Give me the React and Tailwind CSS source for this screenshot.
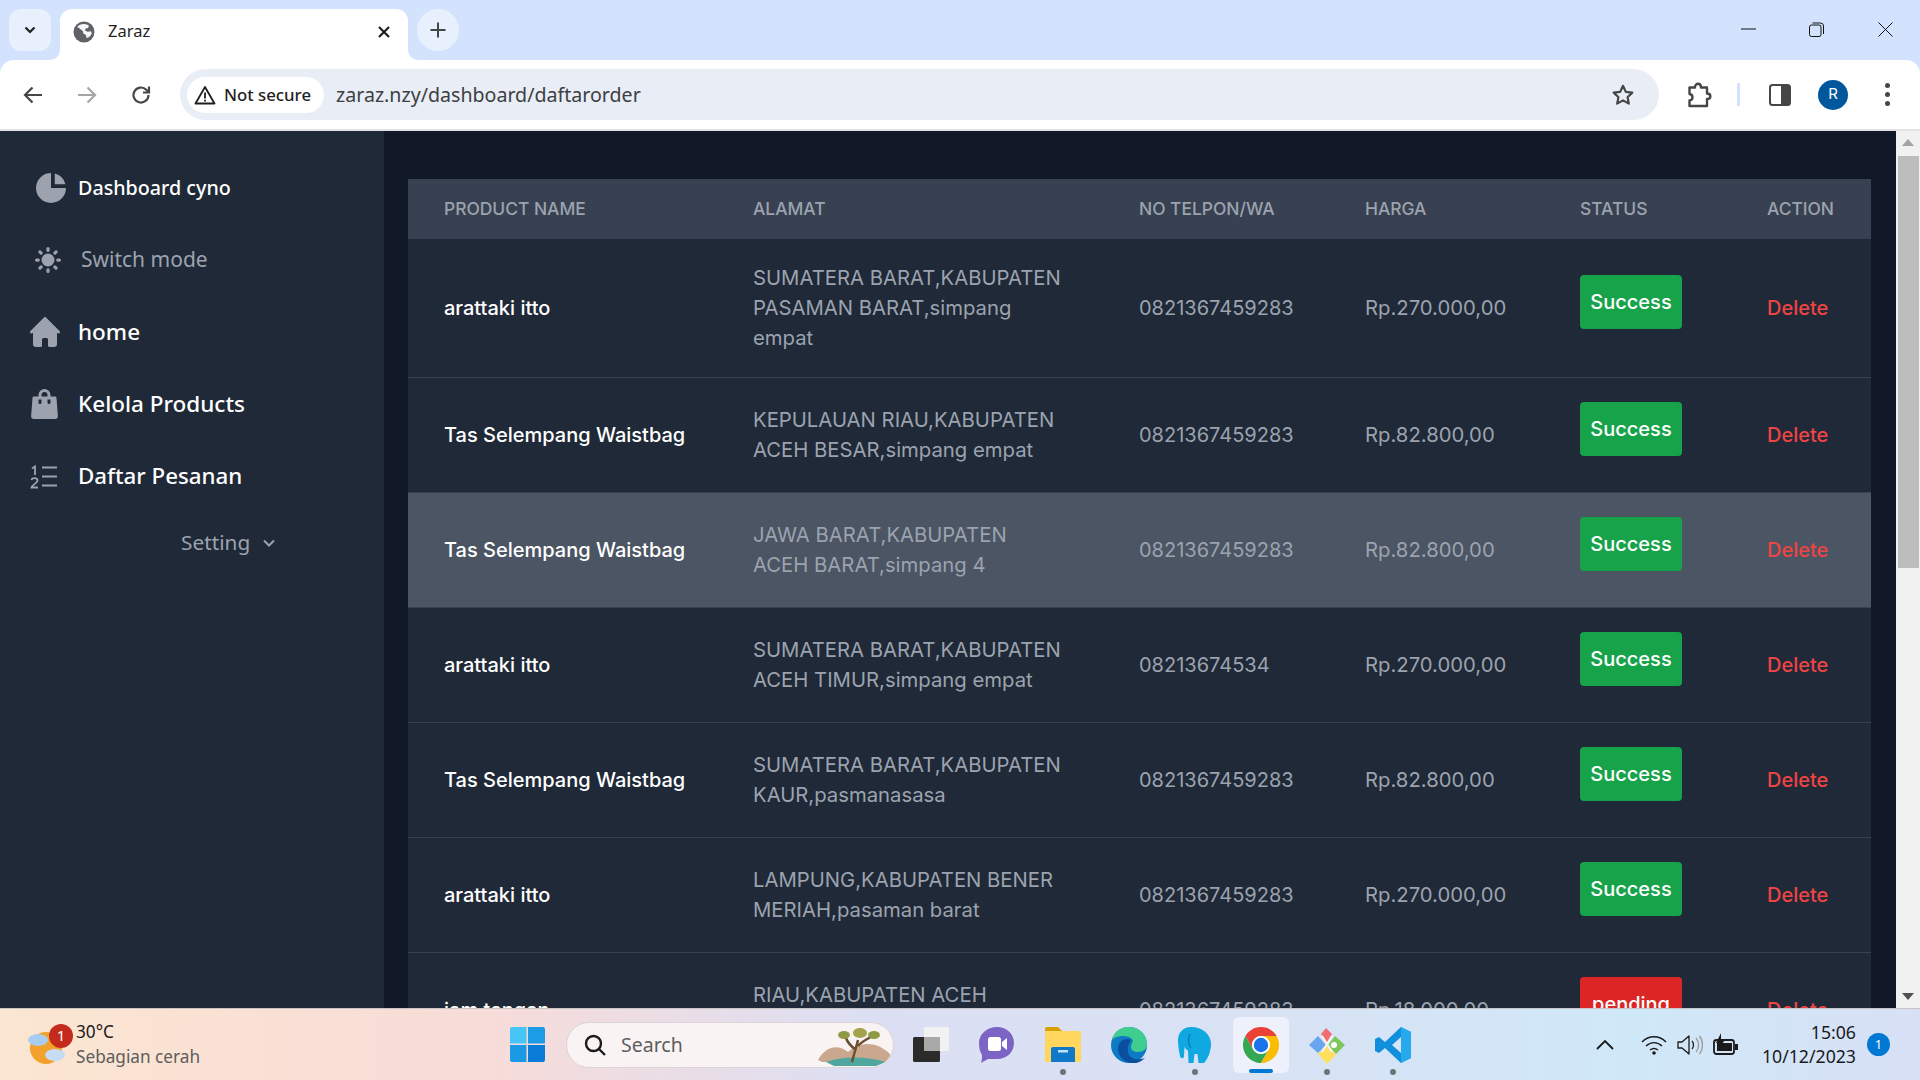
import React from 'react';

const orders = [
  { name: 'arattaki itto', address: ['SUMATERA BARAT,KABUPATEN', 'PASAMAN BARAT,simpang', 'empat'], phone: '0821367459283', price: 'Rp.270.000,00', status: 'Success' },
  { name: 'Tas Selempang Waistbag', address: ['KEPULAUAN RIAU,KABUPATEN', 'ACEH BESAR,simpang empat'], phone: '0821367459283', price: 'Rp.82.800,00', status: 'Success' },
  { name: 'Tas Selempang Waistbag', address: ['JAWA BARAT,KABUPATEN', 'ACEH BARAT,simpang 4'], phone: '0821367459283', price: 'Rp.82.800,00', status: 'Success', hovered: true },
  { name: 'arattaki itto', address: ['SUMATERA BARAT,KABUPATEN', 'ACEH TIMUR,simpang empat'], phone: '08213674534', price: 'Rp.270.000,00', status: 'Success' },
  { name: 'Tas Selempang Waistbag', address: ['SUMATERA BARAT,KABUPATEN', 'KAUR,pasmanasasa'], phone: '0821367459283', price: 'Rp.82.800,00', status: 'Success' },
  { name: 'arattaki itto', address: ['LAMPUNG,KABUPATEN BENER', 'MERIAH,pasaman barat'], phone: '0821367459283', price: 'Rp.270.000,00', status: 'Success' },
  { name: 'jam tangan', address: ['RIAU,KABUPATEN ACEH', 'SELATAN,simpang empat'], phone: '0821367459283', price: 'Rp.18.000,00', status: 'pending' },
];

const BrowserBar = () => (
  <div className="bg-[#d3e3fd] shrink-0 font-['Noto_Sans',sans-serif]">
    <div className="h-[60px] flex items-start pt-[9px] pl-[9px]">
      <div className="w-[42px] h-[42px] rounded-[12px] bg-[#e9f0fd] flex items-center justify-center">
        <svg width="14" height="14" viewBox="0 0 14 14" fill="none" stroke="#1f1f1f" strokeWidth="2.2"><path d="M2.5 4.5 7 9l4.5-4.5" /></svg>
      </div>
      <div className="relative ml-[9px] w-[348px] h-[51px] bg-white rounded-t-[12px] flex items-center pl-[13px] pb-[6px]">
        <svg className="absolute left-[-10px] bottom-0" width="10" height="10" viewBox="0 0 10 10"><path d="M10 0v10H0A10 10 0 0 0 10 0z" fill="#fff" /></svg>
        <svg className="absolute right-[-10px] bottom-0" width="10" height="10" viewBox="0 0 10 10"><path d="M0 0v10h10A10 10 0 0 1 0 0z" fill="#fff" /></svg>
        <svg width="22" height="22" viewBox="0 0 22 22">
          <circle cx="11" cy="11" r="10.5" fill="#5f6368" />
          <path d="M11 3c2 0 3.5.7 5 1.8l-1 2.2-2.4.6-.6 2 2.5 1.2 3.4-.6.9 2.2c-1 2.300-2.800 4-5.300 4.700l-.5-3-2.700-1.500-.3-2.300-3.300-2.800L4.200 6C5.600 4.200 8 3 11 3z" fill="#fff" opacity="0.95" />
        </svg>
        <span className="ml-[13px] text-[16.500px] text-[#1f1f1f]">Zaraz</span>
        <svg className="ml-auto mr-[17px]" width="14" height="14" viewBox="0 0 14 14" stroke="#1f1f1f" strokeWidth="2.2"><path d="M2 2l10 10M12 2 2 12" /></svg>
      </div>
      <div className="ml-[9px] w-[42px] h-[42px] rounded-full bg-[#e9f0fd] flex items-center justify-center">
        <svg width="18" height="18" viewBox="0 0 18 18" stroke="#444746" strokeWidth="2"><path d="M9 1.500v15M1.500 9h15" /></svg>
      </div>
      <div className="ml-auto flex items-center h-[40px]">
        <svg className="mr-[53px]" width="15" height="2" viewBox="0 0 15 2"><path d="M0 1h15" stroke="#111" strokeWidth="1" /></svg>
        <svg className="mr-[54px]" width="15" height="15" viewBox="0 0 15 15" fill="none" stroke="#111" strokeWidth="1"><rect x="0.500" y="3" width="11.500" height="11.500" rx="2" /><path d="M3.500 1h8a3 3 0 0 1 3 3v8" /></svg>
        <svg className="mr-[27px]" width="15" height="15" viewBox="0 0 15 15" stroke="#111" strokeWidth="1"><path d="M.5.5l14 14M14.500.5l-14 14" /></svg>
      </div>
    </div>
    <div className="h-[69px] bg-white rounded-t-[14px] flex items-center">
      <svg className="ml-[22px]" width="22" height="22" viewBox="0 0 22 22" fill="none" stroke="#444746" strokeWidth="2.200"><path d="M20 11H3M10.500 3.500 3 11l7.500 7.500" /></svg>
      <svg className="ml-[32px]" width="22" height="22" viewBox="0 0 22 22" fill="none" stroke="#a3a5a8" strokeWidth="2.200"><path d="M2 11h17M11.500 3.500 19 11l-7.500 7.500" /></svg>
      <svg className="ml-[32px]" width="22" height="22" viewBox="0 0 22 22" fill="none" stroke="#444746" strokeWidth="2.200"><path d="M18.500 11a7.500 7.500 0 1 1-2.200-5.300L18.500 8" /><path d="M19 2.500V8.500H13" /></svg>
      <div className="ml-[28px] w-[1479px] h-[51px] rounded-full bg-[#e9edf6] flex items-center pl-[7px] shrink-0">
        <div className="w-[137px] h-[36px] rounded-full bg-white flex items-center pl-[7px]">
          <svg width="22" height="20" viewBox="0 0 22 20" fill="none" stroke="#1f1f1f" strokeWidth="1.800"><path d="M11 2 20.500 18.500h-19z" strokeLinejoin="round" /><path d="M11 7.500v6M11 14.800v1.700" /></svg>
          <span className="ml-[8px] text-[16.800px] font-medium text-[#1f1f1f] whitespace-nowrap">Not secure</span>
        </div>
        <span className="ml-[12px] text-[19.600px] text-[#3c4043]">zaraz.nzy/dashboard/daftarorder</span>
        <svg className="ml-auto mr-[23px]" width="26" height="26" viewBox="0 0 24 24" fill="none" stroke="#444746" strokeWidth="2"><path d="m12 3.500 2.600 5.600 6 .7-4.400 4.200 1.200 6L12 17l-5.400 3 1.200-6-4.400-4.200 6-.7z" strokeLinejoin="round" /></svg>
      </div>
      <svg className="ml-[28px]" width="25" height="26" viewBox="0 0 25 26" fill="none" stroke="#444746" strokeWidth="2.400"><path d="M2.500 5.500h5.500c0-5 6-5 6 0h6v6c4.500 0 4.500 5.500 0 5.500v7H2.500v-5.500c4-.500 4-6 0-6.500z" strokeLinejoin="round" /></svg>
      <div className="ml-[25px] w-[3px] h-[23px] bg-[#d3e3fd]" />
      <svg className="ml-[29px]" width="22" height="22" viewBox="0 0 22 22"><rect x="1" y="1" width="20" height="20" rx="2.500" fill="none" stroke="#444746" strokeWidth="2" /><path d="M12 1h7a2 2 0 0 1 2 2v16a2 2 0 0 1-2 2h-7z" fill="#444746" /></svg>
      <div className="ml-[27px] w-[30px] h-[30px] rounded-full bg-[#01579b] flex items-center justify-center text-white text-[15px] font-['Inter',sans-serif]">R</div>
      <div className="ml-[37px] flex flex-col gap-[4px]">
        <div className="w-[5px] h-[5px] rounded-full bg-[#444746]" />
        <div className="w-[5px] h-[5px] rounded-full bg-[#444746]" />
        <div className="w-[5px] h-[5px] rounded-full bg-[#444746]" />
      </div>
    </div>
    <div className="h-[2px] bg-[#e2e2e2]" />
  </div>
);

const NavRow = ({ icon, label, muted, textClass }) => (
  <div className="h-[72px] flex items-center">
    <div className="w-[78px] flex justify-end shrink-0 pr-[18px]">{icon}</div>
    <span className={`${muted ? 'text-[#9ca3af] font-normal' : 'text-white font-medium'} ${textClass}`}>{label}</span>
  </div>
);

const Sidebar = () => (
  <aside className="w-[384px] shrink-0 bg-[#1f2937] pt-[21px]">
    <NavRow
      textClass="text-[19.700px]"
      label="Dashboard cyno"
      icon={<svg className="mr-[-6px]" width="30" height="30" viewBox="2 2 16 16" fill="#9ca3af"><path d="M2 10a8 8 0 0 1 8-8v8h8a8 8 0 1 1-16 0z" /><path d="M12 2.252A8.014 8.014 0 0 1 17.748 8H12V2.252z" /></svg>}
    />
    <NavRow
      muted
      textClass="ml-[3px] text-[21px]"
      label="Switch mode"
      icon={<svg className="mr-[-1px]" width="26" height="26" viewBox="2 2 16 16" fill="#9ca3af"><path d="M10 2a1 1 0 0 1 1 1v1a1 1 0 1 1-2 0V3a1 1 0 0 1 1-1zm4 8a4 4 0 1 1-8 0 4 4 0 0 1 8 0zm-.464 4.950.707.707a1 1 0 0 0 1.414-1.414l-.707-.707a1 1 0 0 0-1.414 1.414zm2.120-10.607a1 1 0 0 1 0 1.414l-.706.707a1 1 0 1 1-1.414-1.414l.707-.707a1 1 0 0 1 1.414 0zM17 11a1 1 0 1 0 0-2h-1a1 1 0 1 0 0 2h1zm-7 4a1 1 0 0 1 1 1v1a1 1 0 1 1-2 0v-1a1 1 0 0 1 1-1zM5.050 6.464A1 1 0 1 0 6.465 5.050l-.708-.707a1 1 0 0 0-1.414 1.414l.707.707zm1.414 8.486-.707.707a1 1 0 0 1-1.414-1.414l.707-.707a1 1 0 0 1 1.414 1.414zM4 11a1 1 0 1 0 0-2H3a1 1 0 0 0 0 2h1z" /></svg>}
    />
    <NavRow
      textClass="text-[22.500px]"
      label="home"
      icon={<svg width="30" height="30" viewBox="0 0 20 20" fill="#9ca3af"><path d="m19.707 9.293-2-2-7-7a1 1 0 0 0-1.414 0l-7 7-2 2a1 1 0 0 0 1.414 1.414L2 10.414V18a2 2 0 0 0 2 2h3a1 1 0 0 0 1-1v-4a1 1 0 0 1 1-1h2a1 1 0 0 1 1 1v4a1 1 0 0 0 1 1h3a2 2 0 0 0 2-2v-7.586l.293.293a1 1 0 0 0 1.414-1.414Z" /></svg>}
    />
    <NavRow
      textClass="text-[22.500px]"
      label="Kelola Products"
      icon={<svg className="mr-[2px]" width="27" height="30" viewBox="0 0 18 20" fill="#9ca3af"><path d="M17 5.923A1 1 0 0 0 16 5h-3V4a4 4 0 1 0-8 0v1H2a1 1 0 0 0-1 .923L.086 17.846A2 2 0 0 0 2.080 20h13.840a2 2 0 0 0 1.994-2.153L17 5.923ZM7 9a1 1 0 0 1-2 0V7h2v2Zm0-5a2 2 0 1 1 4 0v1H7V4Zm6 5a1 1 0 1 1-2 0V7h2v2Z" /></svg>}
    />
    <NavRow
      textClass="text-[22.300px]"
      label="Daftar Pesanan"
      icon={<svg className="mr-[2px]" width="28" height="25" viewBox="0 0 28 25" fill="none" stroke="#9ca3af" strokeWidth="1.800"><path d="M2 4.500 5 2.500V11M12 3.500h15M12 12.500h15M12 21.500h15M1.500 16c.5-2.500 6-2.500 6 .5 0 2.500-5.500 4.500-6 7h6.500" /></svg>}
    />
    <div className="h-[62px] flex items-center pl-[181px] text-[20.800px] text-[#9ca3af]">
      <span>Setting</span>
      <svg className="ml-[12px]" width="14" height="14" viewBox="0 0 14 14" fill="none" stroke="#9ca3af" strokeWidth="2"><path d="m2 4.500 5 5 5-5" /></svg>
    </div>
  </aside>
);

const OrdersTable = () => (
  <table className="w-[1463px] table-fixed text-[20px] leading-[30px] text-[#9ca3af] font-['Inter',sans-serif]">
    <thead className="bg-[#374151] text-[17.400px] uppercase">
      <tr className="h-[60px] text-left">
        <th className="w-[309px] pl-[36px] font-medium">Product name</th>
        <th className="w-[386px] pl-[36px] font-medium">Alamat</th>
        <th className="w-[226px] pl-[36px] font-medium">No telpon/wa</th>
        <th className="w-[215px] pl-[36px] font-medium">Harga</th>
        <th className="w-[187px] pl-[36px] font-medium">Status</th>
        <th className="pl-[36px] font-medium">Action</th>
      </tr>
    </thead>
    <tbody>
      {orders.map((order, i) => (
        <tr key={i} className={`border-b border-[#374151] ${order.hovered ? 'bg-[#4b5563]' : 'bg-[#1f2937]'} ${order.address.length > 2 ? 'h-[138px]' : 'h-[115px]'}`}>
          <td className="pl-[36px] font-medium text-white whitespace-nowrap">{order.name}</td>
          <td className="pl-[36px] text-[20.300px]">
            {order.address.map((line) => <div key={line} className="whitespace-nowrap">{line}</div>)}
          </td>
          <td className="pl-[36px]">{order.phone}</td>
          <td className="pl-[36px] text-[20.300px] whitespace-nowrap">{order.price}</td>
          <td className="pl-[36px]">
            <button className={`block w-[102px] h-[54px] mb-[12px] rounded-[4px] font-medium text-white ${order.status === 'pending' ? 'bg-[#dc2626]' : 'bg-[#16a34a]'}`}>{order.status}</button>
          </td>
          <td className="pl-[36px] font-medium text-[#ef4444]">Delete</td>
        </tr>
      ))}
    </tbody>
  </table>
);

const Scrollbar = () => (
  <div className="w-[24px] shrink-0 bg-[#f1f1f1] flex flex-col items-center">
    <svg className="mt-[8px]" width="12" height="7" viewBox="0 0 12 7"><path d="M6 0l6 7H0z" fill="#a3a3a3" /></svg>
    <div className="mt-[10px] w-[21px] h-[412px] bg-[#bdbdbd]" />
    <svg className="mt-auto mb-[8px]" width="12" height="7" viewBox="0 0 12 7"><path d="M6 7 0 0h12z" fill="#505050" /></svg>
  </div>
);

const ChromeIcon = () => (
  <svg width="36" height="36" viewBox="4 4 40 40">
    <path d="M6.680 14A20 20 0 0 1 41.320 14H24A10 10 0 0 0 15.340 29z" fill="#ea4335" />
    <path d="M6.680 14A20 20 0 0 0 24 44L32.660 29A10 10 0 0 1 15.340 29z" fill="#34a853" />
    <path d="M41.320 14A20 20 0 0 1 24 44L32.660 29A10 10 0 0 0 24 14z" fill="#fbbc04" />
    <circle cx="24" cy="24" r="10" fill="#fff" />
    <circle cx="24" cy="24" r="8" fill="#1a73e8" />
  </svg>
);

const taskbarApps = [
  {
    id: 'task',
    icon: (
      <svg width="36" height="36" viewBox="0 0 36 36">
        <rect x="11" y="0" width="25" height="24" rx="1.500" fill="#f2f2f2" />
        <rect x="0" y="10" width="27" height="25" rx="1.500" fill="#2b2b2b" />
        <rect x="11" y="10" width="16" height="14" fill="#a9a9a9" />
      </svg>
    ),
  },
  {
    id: 'meet',
    icon: (
      <svg width="36" height="36" viewBox="0 0 36 36">
        <path d="M18 0c10 0 17 7 17 16s-7 16-17 16H9l-7 4c1-3 1-5 1-8-2-3-3-7-3-12C0 7 8 0 18 0z" fill="#7b64c4" />
        <rect x="9" y="10" width="13" height="14" rx="2.500" fill="#fff" />
        <path d="M23 15l5-4v12l-5-4z" fill="#fff" />
      </svg>
    ),
  },
  {
    id: 'files',
    dot: true,
    icon: (
      <svg width="36" height="36" viewBox="0 0 36 36">
        <path d="M0 2a2 2 0 0 1 2-2h11l4 4h-17z" fill="#d9a000" />
        <rect x="0" y="4" width="36" height="31" rx="1" fill="#ffd75e" />
        <path d="M6 22a2 2 0 0 1 2-2h20a2 2 0 0 1 2 2v13H6z" fill="#0f78c9" />
        <rect x="13" y="23" width="10" height="2.500" fill="#bfe3f7" />
      </svg>
    ),
  },
  {
    id: 'edge',
    icon: (
      <svg width="36" height="36" viewBox="0 0 36 36">
        <circle cx="18" cy="18" r="18" fill="#0c7bc4" />
        <path d="M1 13C3 5 9 0 18 0c10 0 18 7 18 17 0 5-4 8-9 8-4 0-7-2-7-5 0-4 3-5 1-8-3-3-14-5-20 1z" fill="#3fce8f" />
        <path d="M20 13c-6-3-13 1-13 9 0 7 6 13 13 14 5 1 10-1 14-5-7 3-16 1-17-6-1-5 1-9 3-12z" fill="#0a4f9e" />
      </svg>
    ),
  },
  {
    id: 'elephant',
    dot: true,
    icon: (
      <svg width="36" height="36" viewBox="0 0 36 36">
        <path d="M14 0C6 0 1 6 1 13c0 6 1 11 2 16 .5 3 4 3 4 0l.5-9c1 2 2 3 3.500 3.500l.5 12.500h5l1-9h3l1 9h5.500c4-4 7-12 7-19C34 7 25 0 14 0z" fill="#0fa8e0" />
        <path d="M13 7c-2 5-2 10 1 14" fill="none" stroke="#0a7fb5" strokeWidth="1.500" />
      </svg>
    ),
  },
  { id: 'chrome', active: true, icon: <ChromeIcon /> },
  {
    id: 'git',
    dot: true,
    icon: (
      <svg width="38" height="38" viewBox="0 0 38 38">
        <path d="M13 8l5-6 6 6-5 9z" fill="#f26d6d" />
        <path d="M27 10l10 9-9 9-8-9z" fill="#7fc65a" />
        <path d="M1 19l9-9 8 9-8 8z" fill="#6aa5f0" />
        <path d="M10 28l9-8 9 9-9 9z" fill="#ffdf5e" />
        <path d="M14 10 24 26M24 10 14 26" stroke="#f7f2f2" strokeWidth="2" />
        <circle cx="26" cy="19" r="3" fill="#fff" />
      </svg>
    ),
  },
  {
    id: 'vscode',
    dot: true,
    icon: (
      <svg width="36" height="36" viewBox="0 0 36 36">
        <path d="M26 0l10 5v26l-10 5L10 21l-6 5-4-2V12l4-2 6 5zM26 10l-9 8 9 8z" fill="#0f8fdc" />
        <path d="M26 0l10 5v26l-10 5z" fill="#27a9ee" />
      </svg>
    ),
  },
];

const Taskbar = () => (
  <div className="relative h-[72px] shrink-0 border-t border-[#c9c4c4] flex items-center bg-[linear-gradient(90deg,#fbe6d1_0%,#f8dcd8_25%,#dcdff3_45%,#d9e2f5_65%,#cfe8f8_85%,#d8e0f6_100%)] font-['Noto_Sans',sans-serif]">
    <div className="w-[494px] flex items-center pl-[28px] shrink-0">
      <div className="relative w-[40px] h-[42px]">
        <svg width="40" height="42" viewBox="0 0 40 42">
          <circle cx="18" cy="24" r="16" fill="#f2a12b" />
          <ellipse cx="10" cy="16" rx="10" ry="6" fill="#a9cdf0" />
          <ellipse cx="27" cy="31" rx="10" ry="6" fill="#c6dcf5" />
        </svg>
        <div className="absolute top-0 right-[-5px] w-[24px] h-[24px] rounded-full bg-[#c42b1c] text-white text-[15px] flex items-center justify-center">1</div>
      </div>
      <div className="ml-[8px] mb-[2px] leading-[25px] text-[17.200px]">
        <div className="text-[#1b1b1b]">30°C</div>
        <div className="text-[#5d5d5d]">Sebagian cerah</div>
      </div>
    </div>
    <svg className="shrink-0 ml-[16px]" width="35" height="35" viewBox="0 0 35 35">
      <path d="M0 2a2 2 0 0 1 2-2h14.500v16.500H0z" fill="#47c5f7" />
      <path d="M18 0h15a2 2 0 0 1 2 2v14.500H18z" fill="#1c9ce6" />
      <path d="M0 18h16.500v17H2a2 2 0 0 1-2-2z" fill="#1a9ae4" />
      <path d="M18 18h17v15a2 2 0 0 1-2 2H18z" fill="#0a7bd6" />
    </svg>
    <div className="ml-[21px] w-[328px] h-[46px] rounded-full bg-[#faf3f4] border border-[#dcd3d9] flex items-center pl-[16px] shrink-0 overflow-hidden">
      <svg width="24" height="24" viewBox="0 0 24 24" fill="none" stroke="#1b1b1b" strokeWidth="2.400"><circle cx="10.500" cy="10.500" r="7.500" /><path d="m16 16 6 6" /></svg>
      <span className="ml-[14px] text-[19.500px] text-[#5d5d5d]">Search</span>
      <svg className="ml-auto mr-[3px]" width="72" height="42" viewBox="0 0 72 42">
        <path d="M0 36c8-14 20-16 30-8 8-8 26-14 42 2v8H4z" fill="#c9a88f" />
        <path d="M8 38c16-6 40-6 60 0l-10 4H16z" fill="#4fa7a0" />
        <path d="M34 38c2-8 4-14 6-22M38 26c-4-3-8-6-10-12M40 22c3-4 8-6 14-10" stroke="#6b4f2e" strokeWidth="2.500" fill="none" />
        <ellipse cx="26" cy="11" rx="6" ry="4" fill="#8f9a45" />
        <ellipse cx="42" cy="9" rx="7" ry="5" fill="#a3a34b" />
        <ellipse cx="56" cy="11" rx="6" ry="4" fill="#8f9a45" />
      </svg>
    </div>
    <div className="ml-[4px] flex items-center shrink-0">
      {taskbarApps.map((app) => (
        <div key={app.id} className="relative w-[66px] h-[56px] flex items-center justify-center">
          {app.active && <div className="absolute left-[5px] top-0 w-[56px] h-[56px] rounded-[6px] bg-[#eef0fb]" />}
          <div className="relative flex">{app.icon}</div>
          {app.dot && <div className="absolute bottom-[-2px] left-[30px] w-[6px] h-[6px] rounded-full bg-[#6f7378]" />}
          {app.active && <div className="absolute bottom-0 left-[21px] w-[24px] h-[4px] rounded-full bg-[#0078d4]" />}
        </div>
      ))}
    </div>
    <div className="ml-auto flex items-center pr-[30px]">
      <svg width="18" height="10" viewBox="0 0 18 10" fill="none" stroke="#1b1b1b" strokeWidth="1.800"><path d="m1 9 8-8 8 8" /></svg>
      <svg className="ml-[27px]" width="26" height="20" viewBox="0 0 26 20" fill="none" stroke="#1b1b1b" strokeWidth="1.500"><path d="M1 7c7-7 17-7 24 0M5 11c5-4.500 11-4.500 16 0M9 15c2.500-2 5.500-2 8 0" /><circle cx="13" cy="18" r="1.800" fill="#1b1b1b" stroke="none" /></svg>
      <svg className="ml-[10px]" width="26" height="22" viewBox="0 0 26 22" fill="none" stroke="#1b1b1b" strokeWidth="1.300"><path d="M1 8h4l7-6v18l-7-6H1z" strokeLinejoin="round" /><path d="M15 7c2 2 2 6 0 8" /><path d="M19 4c3.500 4 3.500 10 0 14M22.500 2c4 5 4 13 0 18" stroke="#9a9a9a" /></svg>
      <svg className="ml-[10px]" width="25" height="24" viewBox="0 0 25 24"><rect x="1" y="7" width="20" height="14" rx="2.500" fill="none" stroke="#1b1b1b" strokeWidth="1.800" /><rect x="4" y="10" width="15" height="8" fill="#1b1b1b" /><rect x="22" y="11" width="3" height="6" fill="#1b1b1b" /><path d="M8 0 3 10h4l-1 5 6-8H8z" fill="#1b1b1b" /></svg>
      <div className="ml-[24px] mb-[1px] text-right text-[17.700px] leading-[24px] text-[#1b1b1b]">
        <div>15:06</div>
        <div>10/12/2023</div>
      </div>
      <div className="ml-[11px] w-[23px] h-[23px] rounded-full bg-[#0078d4] text-white text-[13px] flex items-center justify-center">1</div>
    </div>
  </div>
);

export default function App() {
  return (
    <div className="w-[1920px] h-[1080px] flex flex-col overflow-hidden">
      <BrowserBar />
      <div className="flex-1 min-h-0 flex">
        <Sidebar />
        <main className="flex-1 min-w-0 bg-[#111827] pt-[48px] pl-[24px] overflow-hidden">
          <OrdersTable />
        </main>
        <Scrollbar />
      </div>
      <Taskbar />
    </div>
  );
}
